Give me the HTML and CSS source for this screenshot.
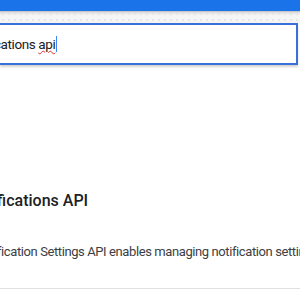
FILE: index.html
```html
<!DOCTYPE html>
<html lang="en">
<head>
	<meta charset="UTF-8">
	<title>API Library</title>
	<link rel="stylesheet" href="styles.css">
</head>
<body>
	<div class="topbar"></div>
	<div class="shade"></div>
	<div class="search">
		<span class="query">notifications <u class="typo">api</u></span><span class="caret"></span>
	</div>
	<div class="result">
		<h2 class="title">Notifications API</h2>
		<p class="desc">The Notification Settings API enables managing notification settings for users.</p>
	</div>
	<div class="divider"></div>
</body>
</html>
```
FILE: styles.css
```css
*{
	margin: 0;
	padding: 0;
	box-sizing: border-box;
}
body{
	width: 300px;
	overflow: hidden;
	background: #fff;
	font-family: Roboto, "Liberation Sans", sans-serif;
}
.topbar{
	height: 11px;
	background: #1a73e8;
}
.shade{
	height: 12px;
	background:
		radial-gradient(circle, #e6e6e6 1px, transparent 1px) 0 0 / 6px 6px,
		linear-gradient(#bdbdbd, #e8e8e8 2px, #f6f6f6 5px, #f4f4f4);
}
.search{
	width: 298px;
	height: 42px;
	border-top: 2px solid #3b6fd9;
	border-right: 2px solid #3b6fd9;
	border-bottom: 2px solid #3b6fd9;
	display: flex;
	align-items: center;
	overflow: hidden;
	box-shadow: 0 2px 2px rgba(0,0,0,0.18);
	background: #fff;
}
.query{
	margin-left: -34.5px;
	font-size: 13.5px;
	letter-spacing: -0.4px;
	color: #202124;
	white-space: nowrap;
}
.typo{
	text-decoration: underline wavy #d93025;
	text-decoration-thickness: 1px;
}
.caret{
	margin-left: 1px;
	width: 1px;
	height: 16px;
	background: #4285f4;
}
.result{
	padding-top: 125px;
	white-space: nowrap;
}
.title{
	margin-left: -33px;
	font-size: 16px;
	font-weight: 500;
	color: #202124;
	line-height: 22px;
}
.desc{
	margin-top: 30px;
	margin-left: -49px;
	font-size: 13px;
	letter-spacing: -0.4px;
	color: #3c4043;
	line-height: 20px;
}
.divider{
	margin-top: 26px;
	height: 1px;
	background: #e0e0e0;
}
```
